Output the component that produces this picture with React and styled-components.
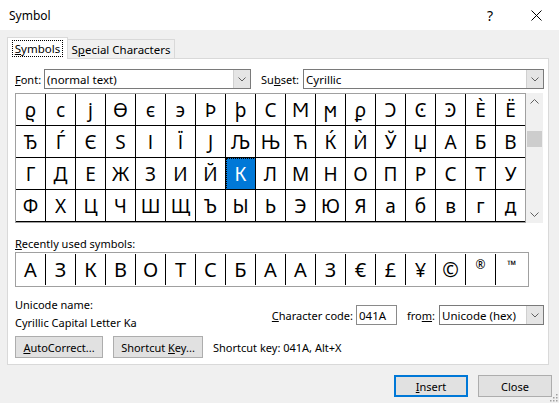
import React from "react";
import styled, { createGlobalStyle } from "styled-components";

const GlobalStyle = createGlobalStyle`
  html, body {
    margin: 0;
    padding: 0;
  }
  body {
    background: #f0f0f0;
    font-family: "Segoe UI", "Noto Sans", "DejaVu Sans", sans-serif;
    font-size: 11px;
    color: #000;
  }
`;

const UI_FONT = `"Segoe UI", "Noto Sans", "DejaVu Sans", sans-serif`;

const Dialog = styled.div`
  position: relative;
  width: 559px;
  height: 403px;
  overflow: hidden;
  display: flex;
  flex-direction: column;
  background: #f0f0f0;
`;

const TitleBar = styled.div`
  height: 30px;
  display: flex;
  align-items: center;
  background: #fff;
  padding-left: 9px;
`;

const Title = styled.div`
  flex: 1;
  font-size: 12px;
`;

const TitleButton = styled.div`
  width: 46px;
  height: 30px;
  display: flex;
  align-items: center;
  justify-content: center;
  font-size: 14px;
`;

const Tabs = styled.div`
  display: flex;
  align-items: flex-end;
  height: 21px;
  margin: 7px 0 0 7px;
  position: relative;
  z-index: 1;
`;

const Tab = styled.div`
  box-sizing: border-box;
  width: ${p => p.$w}px;
  height: ${p => (p.$active ? 22 : 19)}px;
  margin-bottom: ${p => (p.$active ? -1 : 0)}px;
  margin-left: ${p => (p.$active ? 0 : -1)}px;
  display: flex;
  align-items: center;
  justify-content: center;
  background: ${p => (p.$active ? "#fff" : "#f0f0f0")};
  border: 1px solid #d9d9d9;
  border-bottom: none;
  font-size: 11.5px;
`;

const FocusText = styled.span`
  outline: 1px dotted #000;
  outline-offset: 0;
  padding: 0 2px;
  line-height: 15px;
`;

const Panel = styled.div`
  box-sizing: border-box;
  width: 542px;
  height: 307px;
  margin-left: 7px;
  background: #fff;
  border: 1px solid #d9d9d9;
  padding: 10px 4px 0 7px;
  display: flex;
  flex-direction: column;
`;

const Row = styled.div`
  display: flex;
  align-items: center;
`;

const Label = styled.span`
  margin-right: ${p => p.$mr || 0}px;
  margin-left: ${p => p.$ml || 0}px;
  white-space: nowrap;
`;

const Select = styled.div`
  box-sizing: border-box;
  width: ${p => p.$w}px;
  height: 20px;
  display: flex;
  align-items: center;
  border: 1px solid #7a7a7a;
  background: #fff;
`;

const SelectText = styled.span`
  flex: 1;
  padding-left: 2px;
  white-space: nowrap;
  font-size: 11.5px;
`;

const DropButton = styled.span`
  width: 16px;
  height: 18px;
  display: flex;
  align-items: center;
  justify-content: center;
  background: #e5e5e5;
  border-left: 1px solid #d0d0d0;
`;

const GridRow = styled.div`
  display: flex;
  margin-top: 4px;
`;

const SymbolGrid = styled.div`
  box-sizing: border-box;
  width: 511px;
  border: 1px solid #a0a0a0;
  display: grid;
  grid-template-columns: repeat(16, 30px) 29px;
  grid-auto-rows: 32px;
  background: #fff;
`;

const Cell = styled.div`
  box-sizing: border-box;
  display: flex;
  align-items: center;
  justify-content: center;
  border-bottom: 1px solid #000;
  border-right: 1px solid #000;
  &:nth-child(17n) {
    border-right: none;
  }
  font-family: ${UI_FONT};
  font-size: 19px;
  background: ${p => (p.$selected ? "#0078d7" : "#fff")};
  color: ${p => (p.$selected ? "#fff" : "#000")};
  outline: ${p => (p.$selected ? "1px dotted #000" : "none")};
  outline-offset: -1px;
`;

const ScrollBar = styled.div`
  width: 17px;
  display: flex;
  flex-direction: column;
  background: #f0f0f0;
`;

const ScrollArrow = styled.div`
  height: 17px;
  display: flex;
  align-items: center;
  justify-content: center;
`;

const ScrollTrack = styled.div`
  flex: 1;
  padding: 21px 1px 0;
`;

const Thumb = styled.div`
  height: 16px;
  background: #cdcdcd;
`;

const SectionLabel = styled.div`
  margin-top: 13px;
  line-height: 16px;
`;

const RecentBox = styled.div`
  box-sizing: border-box;
  width: 514px;
  height: 35px;
  border: 1px solid #a0a0a0;
  display: flex;
  align-items: stretch;
  padding: 1px 0;
`;

const RecentCell = styled.div`
  width: 30px;
  box-sizing: border-box;
  border-right: 1px solid #000;
  display: flex;
  justify-content: center;
  align-items: ${p => (p.$small ? "flex-start" : "center")};
  padding-top: ${p => (p.$small ? 5 : 0)}px;
  font-family: ${UI_FONT};
  font-size: ${p => (p.$small ? 12 : 20)}px;
  line-height: 1;
  &:last-child {
    flex: 1;
    border-right: none;
  }
`;

const InfoRow = styled.div`
  display: flex;
  align-items: flex-start;
  margin-top: 10px;
`;

const InfoCol = styled.div`
  flex: 1;
  display: flex;
  flex-direction: column;
  gap: 2px;
  line-height: 16px;
`;

const CodeGroup = styled.div`
  display: flex;
  align-items: center;
  margin-top: 8px;
`;

const CodeInput = styled.div`
  box-sizing: border-box;
  width: 41px;
  height: 20px;
  border: 1px solid #8a8a8a;
  padding-left: 2px;
  display: flex;
  align-items: center;
  margin-right: 10px;
  font-size: 11.5px;
`;

const ButtonRow = styled.div`
  display: flex;
  align-items: center;
  gap: 10px;
  margin-top: 5px;
`;

const Button = styled.div`
  box-sizing: border-box;
  width: ${p => p.$w}px;
  height: 22px;
  display: flex;
  align-items: center;
  justify-content: center;
  background: #e1e1e1;
  border: ${p => (p.$default ? "2px solid #0078d7" : "1px solid #adadad")};
  white-space: nowrap;
`;

const Footer = styled.div`
  display: flex;
  justify-content: flex-end;
  gap: 10px;
  margin: 10px 7px 0 0;
`;

const Grip = styled.svg`
  position: absolute;
  right: 1px;
  bottom: 1px;
`;

const Chevron = ({ up, color = "#606060" }) => (
  <svg width="9" height="5" viewBox="0 0 9 5">
    <polyline
      points={up ? "0.5,4.5 4.5,0.5 8.5,4.5" : "0.5,0.5 4.5,4.5 8.5,0.5"}
      fill="none"
      stroke={color}
      strokeWidth="1"
    />
  </svg>
);

const Dropdown = ({ w, text }) => (
  <Select $w={w}>
    <SelectText>{text}</SelectText>
    <DropButton>
      <svg width="8" height="5" viewBox="0 0 8 5">
        <polyline points="0.5,0.5 4,4 7.5,0.5" fill="none" stroke="#606060" strokeWidth="1" />
      </svg>
    </DropButton>
  </Select>
);

const START = 0x03f1;
const symbols = Array.from({ length: 68 }, (_, i) => String.fromCodePoint(START + i));
const SELECTED = 0x041a - START;

const recent = ["А", "З", "К", "В", "О", "Т", "С", "Б", "А", "A", "3", "€", "£", "¥", "©", "®", "™"];

export default function App() {
  return (
    <Dialog>
      <GlobalStyle />
      <TitleBar>
        <Title>Symbol</Title>
        <TitleButton>?</TitleButton>
        <TitleButton>
          <svg width="11" height="11" viewBox="0 0 11 11">
            <path d="M0.5 0.5 L10.5 10.5 M10.5 0.5 L0.5 10.5" stroke="#000" strokeWidth="1" />
          </svg>
        </TitleButton>
      </TitleBar>

      <Tabs>
        <Tab $active $w={61}>
          <FocusText>
            <u>S</u>ymbols
          </FocusText>
        </Tab>
        <Tab $w={108}>
          <span>
            S<u>p</u>ecial Characters
          </span>
        </Tab>
      </Tabs>

      <Panel>
        <Row>
          <Label $mr={3}>
            <u>F</u>ont:
          </Label>
          <Dropdown w={207} text="(normal text)" />
          <Label $ml={10} $mr={4}>
            Su<u>b</u>set:
          </Label>
          <Dropdown w={241} text="Cyrillic" />
        </Row>

        <GridRow>
          <SymbolGrid>
            {symbols.map((s, i) => (
              <Cell key={i} $selected={i === SELECTED}>
                {s}
              </Cell>
            ))}
          </SymbolGrid>
          <ScrollBar>
            <ScrollArrow>
              <Chevron up />
            </ScrollArrow>
            <ScrollTrack>
              <Thumb />
            </ScrollTrack>
            <ScrollArrow>
              <Chevron />
            </ScrollArrow>
          </ScrollBar>
        </GridRow>

        <SectionLabel>
          <u>R</u>ecently used symbols:
        </SectionLabel>
        <RecentBox>
          {recent.map((s, i) => (
            <RecentCell key={i} $small={s === "®" || s === "™"}>
              {s}
            </RecentCell>
          ))}
        </RecentBox>

        <InfoRow>
          <InfoCol>
            <span>Unicode name:</span>
            <span>Cyrillic Capital Letter Ka</span>
          </InfoCol>
          <CodeGroup>
            <Label $mr={3}>
              <u>C</u>haracter code:
            </Label>
            <CodeInput>041A</CodeInput>
            <Label $mr={4}>
              fro<u>m</u>:
            </Label>
            <Dropdown w={105} text="Unicode (hex)" />
          </CodeGroup>
        </InfoRow>

        <ButtonRow>
          <Button $w={88}>
            <span>
              <u>A</u>utoCorrect...
            </span>
          </Button>
          <Button $w={90}>
            <span>
              Shortcut <u>K</u>ey...
            </span>
          </Button>
          <Label>Shortcut key: 041A, Alt+X</Label>
        </ButtonRow>
      </Panel>

      <Footer>
        <Button $w={74} $default>
          <span>
            <u>I</u>nsert
          </span>
        </Button>
        <Button $w={74}>Close</Button>
      </Footer>

      <Grip width="10" height="10" viewBox="0 0 10 10">
        {[
          [8, 2],
          [8, 5],
          [5, 5],
          [8, 8],
          [5, 8],
          [2, 8],
        ].map(([x, y], i) => (
          <rect key={i} x={x} y={y} width="1.5" height="1.5" fill="#a0a0a0" />
        ))}
      </Grip>
    </Dialog>
  );
}
